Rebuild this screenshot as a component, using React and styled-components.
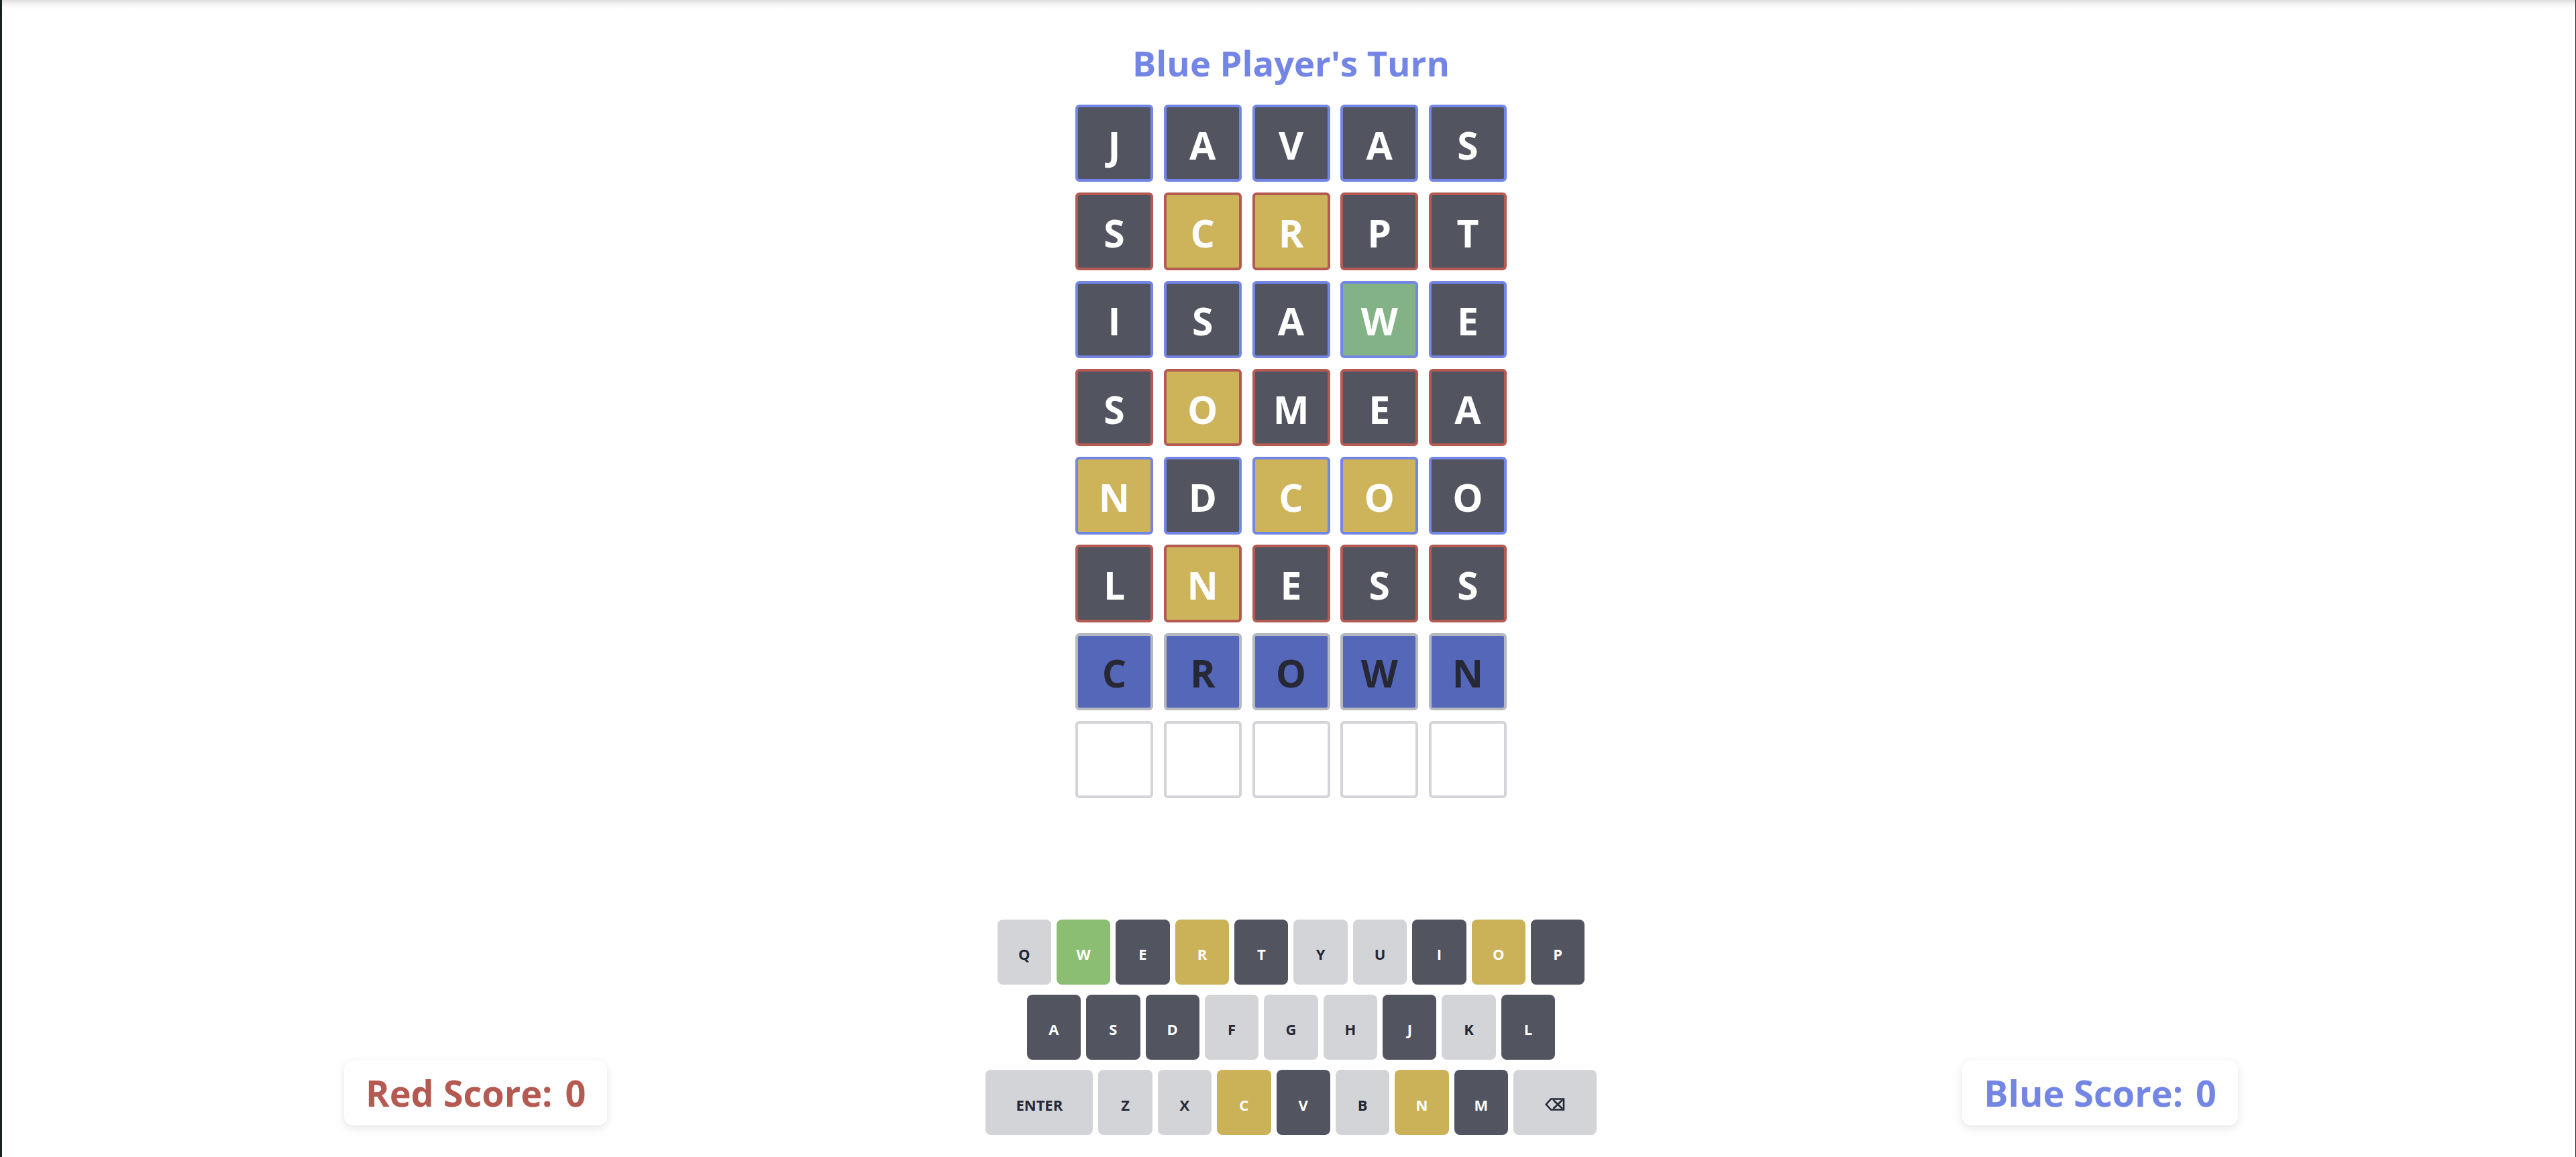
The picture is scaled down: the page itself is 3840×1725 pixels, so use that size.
import React from "react";
import styled, { createGlobalStyle } from "styled-components";

const GlobalStyle = createGlobalStyle`
  html, body {
    margin: 0;
    padding: 0;
    background: #ffffff;
  }
  body {
    font-family: "Open Sans", "Noto Sans", sans-serif;
  }
  * { box-sizing: border-box; }
`;

const C = {
  blue: "#7386e5",
  red: "#b55a53",
  dark: "#525460",
  yellow: "#cdb35a",
  green: "#84b287",
  active: "#5567b9",
  activeBorder: "#b6b8bf",
  empty: "#d3d4d8",
  keyLight: "#d3d4d8",
  keyYellow: "#cbb258",
  keyGreen: "#8bbe72",
  ink: "#262835",
};

const Page = styled.div`
  min-height: 100vh;
  display: flex;
  flex-direction: column;
  border-left: 3px solid #18201f;
  border-right: 1px solid #202424;
  background: linear-gradient(to bottom, #dedede 0px, #f3f3f3 6px, #fdfdfd 12px, #ffffff 16px) no-repeat;
  padding: 0 503px 0 510px;
`;

const Title = styled.h1`
  margin: 61px 0 0;
  text-align: center;
  font-family: "Open Sans", sans-serif;
  font-weight: 700;
  font-size: 52.5px;
  line-height: 66px;
  letter-spacing: 0;
  color: ${C.blue};
`;

const Board = styled.div`
  margin: 29px auto 0;
  display: grid;
  grid-template-columns: repeat(5, 116px);
  grid-auto-rows: 115.4px;
  column-gap: 15.75px;
  row-gap: 15.9px;
`;

const tileBg = {
  dark: C.dark,
  yellow: C.yellow,
  green: C.green,
  active: C.active,
  empty: "#ffffff",
};

const Tile = styled.div`
  display: flex;
  align-items: center;
  justify-content: center;
  padding-top: 5px;
  border-radius: 6px;
  border: 4px solid ${(p) => p.$border};
  background: ${(p) => tileBg[p.$state]};
  color: ${(p) => (p.$state === "active" ? C.ink : "#ffffff")};
  font-family: "Open Sans", sans-serif;
  font-weight: 700;
  font-size: 57px;
  line-height: 1;
`;

const Spacer = styled.div`
  flex: 1;
`;

const BottomRow = styled.div`
  display: grid;
  grid-template-columns: 1fr auto 1fr;
  align-items: end;
  padding-bottom: 33px;
`;

const ScoreCard = styled.div`
  justify-self: ${(p) => (p.$side === "left" ? "start" : "end")};
  margin-bottom: 14.5px;
  height: 96.7px;
  padding: 0 32px;
  display: flex;
  align-items: center;
  gap: 19px;
  background: #ffffff;
  border-radius: 13px;
  box-shadow: 0 4px 14px rgba(0, 0, 0, 0.1), 0 0 2px rgba(0, 0, 0, 0.04);
  color: ${(p) => p.$color};
  font-family: "Open Sans", sans-serif;
  font-weight: 700;
  font-size: 54px;
  letter-spacing: 0;
  line-height: 1;
  white-space: nowrap;
`;

const Keyboard = styled.div`
  display: flex;
  flex-direction: column;
  align-items: center;
  gap: 15.5px;
`;

const KeyRow = styled.div`
  display: flex;
  gap: 8px;
`;

const keyBg = {
  light: C.keyLight,
  dark: C.dark,
  yellow: C.keyYellow,
  green: C.keyGreen,
};

const Key = styled.div`
  width: ${(p) => p.$w || 80.4}px;
  height: 96.7px;
  border-radius: 8px;
  display: flex;
  align-items: center;
  justify-content: center;
  padding-top: 6px;
  background: ${(p) => keyBg[p.$state]};
  color: ${(p) => (p.$state === "light" ? C.ink : "#ffffff")};
  font-family: "Open Sans", sans-serif;
  font-weight: 700;
  font-size: 22px;
  line-height: 1;
`;

const BackIcon = () => (
  <svg width="30" height="19" viewBox="0 0 30 19" fill="none" stroke={C.ink} strokeWidth="2.6" strokeLinejoin="miter">
    <path d="M9 1.5 H28 V17.5 H9 L1.8 9.5 Z" />
    <path d="M12.5 3 L26 16 M26 3 L12.5 16" />
  </svg>
);

const rows = [
  { word: "JAVAS", team: "blue", s: "ddddd" },
  { word: "SCRPT", team: "red", s: "dyydd" },
  { word: "ISAWE", team: "blue", s: "dddgd" },
  { word: "SOMEA", team: "red", s: "dyddd" },
  { word: "NDCOO", team: "blue", s: "ydyyd" },
  { word: "LNESS", team: "red", s: "dyddd" },
];
const code = { d: "dark", y: "yellow", g: "green" };

const keyRows = [
  [["Q", "light"], ["W", "green"], ["E", "dark"], ["R", "yellow"], ["T", "dark"], ["Y", "light"], ["U", "light"], ["I", "dark"], ["O", "yellow"], ["P", "dark"]],
  [["A", "dark"], ["S", "dark"], ["D", "dark"], ["F", "light"], ["G", "light"], ["H", "light"], ["J", "dark"], ["K", "light"], ["L", "dark"]],
  [["ENTER", "light", 160], ["Z", "light"], ["X", "light"], ["C", "yellow"], ["V", "dark"], ["B", "light"], ["N", "yellow"], ["M", "dark"], ["BACK", "light", 123.6]],
];

export default function App() {
  return (
    <>
      <GlobalStyle />
      <Page>
        <Title>Blue Player's Turn</Title>
        <Board>
          {rows.map((r, ri) =>
            r.word.split("").map((ch, i) => (
              <Tile key={`${ri}-${i}`} $state={code[r.s[i]]} $border={r.team === "blue" ? C.blue : C.red}>
                {ch}
              </Tile>
            ))
          )}
          {"CROWN".split("").map((ch, i) => (
            <Tile key={`a-${i}`} $state="active" $border={C.activeBorder}>
              {ch}
            </Tile>
          ))}
          {[0, 1, 2, 3, 4].map((i) => (
            <Tile key={`e-${i}`} $state="empty" $border={C.empty} />
          ))}
        </Board>
        <Spacer />
        <BottomRow>
          <ScoreCard $side="left" $color={C.red}>
            <span>Red Score:</span>
            <span>0</span>
          </ScoreCard>
          <Keyboard>
            {keyRows.map((row, ri) => (
              <KeyRow key={ri}>
                {row.map(([label, state, w]) => (
                  <Key key={label} $state={state} $w={w}>
                    {label === "BACK" ? <BackIcon /> : label}
                  </Key>
                ))}
              </KeyRow>
            ))}
          </Keyboard>
          <ScoreCard $side="right" $color={C.blue}>
            <span>Blue Score:</span>
            <span>0</span>
          </ScoreCard>
        </BottomRow>
      </Page>
    </>
  );
}
